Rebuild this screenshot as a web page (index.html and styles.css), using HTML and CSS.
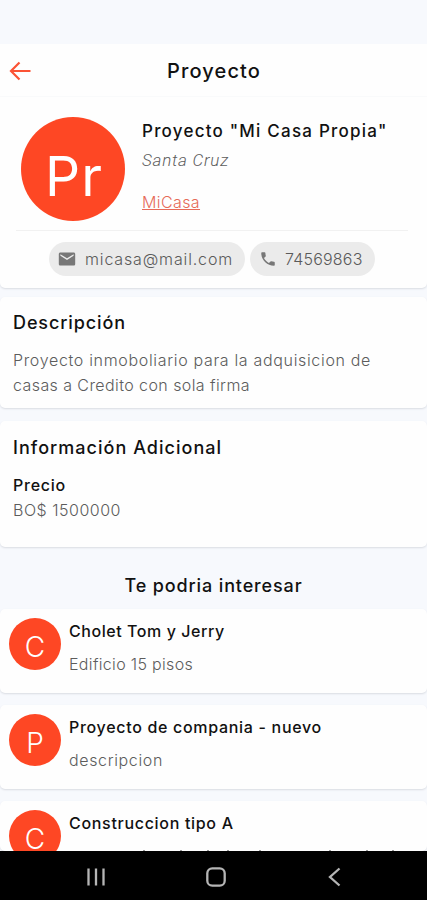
FILE: index.html
```
<!DOCTYPE html>
<html lang="es">
<head>
<meta charset="utf-8">
<title>Proyecto</title>
<link rel="stylesheet" href="styles.css">
</head>
<body>
<div class="screen">
  <div class="status"></div>
  <header class="topbar">
    <svg class="back" width="24" height="24" viewBox="0 0 24 24"><path d="M22.500 12H3M11.500 3.500 3 12l8.500 8.500"/></svg>
    <h1>Proyecto</h1>
  </header>
  <section class="card profile">
    <div class="identity">
      <div class="avatar large"><span>Pr</span></div>
      <div class="info">
        <h2 class="name">Proyecto "Mi Casa Propia"</h2>
        <p class="city">Santa Cruz</p>
        <a class="company">MiCasa</a>
      </div>
    </div>
    <div class="chips">
      <div class="chip mail">
        <svg width="20" height="18" viewBox="2 3 20 18" preserveAspectRatio="xMidYMid meet"><path d="M18.600 5.500H5.400c-.9 0-1.600.7-1.600 1.600v9.800c0 .9.7 1.600 1.600 1.600h13.200c.9 0 1.600-.7 1.600-1.600V7.100c0-.9-.7-1.600-1.600-1.600zm0 3.300L12 12.900 5.400 8.800V7.200l6.600 4.100 6.600-4.100v1.600z"/></svg>
        <span>micasa@mail.com</span>
      </div>
      <div class="chip phone">
        <svg width="18" height="18" viewBox="0 0 24 24"><path d="M6.620 10.790c1.440 2.830 3.760 5.140 6.590 6.590l2.200-2.200c.27-.27.67-.36 1.020-.24 1.120.37 2.330.57 3.570.57.55 0 1 .45 1 1V20c0 .55-.45 1-1 1C10.610 21 3 13.390 3 4c0-.55.45-1 1-1h3.500c.55 0 1 .45 1 1 0 1.250.2 2.450.57 3.570.11.35.03.74-.25 1.020l-2.200 2.200z"/></svg>
        <span>74569863</span>
      </div>
    </div>
  </section>
  <section class="card description">
    <h2>Descripción</h2>
    <p class="first">Proyecto inmoboliario para la adquisicion de</p>
    <p class="second">casas a Credito con sola firma</p>
  </section>
  <section class="card extra">
    <h2>Información Adicional</h2>
    <h3>Precio</h3>
    <p>BO$ 1500000</p>
  </section>
  <h2 class="suggest">Te podria interesar</h2>
  <article class="card item one">
    <div class="avatar"><span>C</span></div>
    <div class="text"><h3>Cholet Tom y Jerry</h3><p>Edificio 15 pisos</p></div>
  </article>
  <article class="card item two">
    <div class="avatar"><span>P</span></div>
    <div class="text"><h3>Proyecto de compania - nuevo</h3><p>descripcion</p></div>
  </article>
  <article class="card item three">
    <div class="avatar"><span>C</span></div>
    <div class="text">
      <h3>Construccion tipo A</h3>
      <svg class="clipped" width="340" height="2" viewBox="0 0 340 2"><path d="M74 1.500h2M111 1.500h2M138 1.500h2M158 1.500h2M190 1.500h2M260 1.500h2M297 1.500h2M323 1.500h2"/></svg>
    </div>
  </article>
</div>
<nav class="navbar">
  <svg width="20" height="20" viewBox="0 0 20 20"><path d="M2.500 1.500v17M10 1.500v17M17.500 1.500v17"/></svg>
  <svg width="20" height="20" viewBox="0 0 20 20"><rect x="1.300" y="1.300" width="17.400" height="17.400" rx="5"/></svg>
  <svg width="20" height="20" viewBox="0 0 20 20"><path d="M14.500 1.500 5 10l9.500 8.500"/></svg>
</nav>
</body>
</html>
```
FILE: styles.css
```
* { box-sizing: border-box; }
body {
  margin: 0;
  height: 900px;
  overflow: hidden;
  display: flex;
  flex-direction: column;
  background: #f7f9fd;
  color: #111;
  font: 300 16px/24px Inter, sans-serif;
}
h1, h2, h3, p { margin: 0; font-weight: 500; }
h2 { font-size: 18px; }
h3 { font-size: 16px; }
p { font-weight: 300; color: #5c5c5c; }
.screen { height: 851px; overflow: hidden; flex: none; }
.status { height: 44px; }
.topbar {
  height: 53px;
  background: #fefefe;
  display: grid;
  grid-template-columns: 34px 1fr 34px;
  align-items: center;
  padding: 2px 7px 0 8px;
  border-bottom: 1px solid #fbfbfc;
}
.back { fill: none; stroke: #fb5335; stroke-width: 2.2; }
h1 { font-size: 20px; letter-spacing: 1.13px; text-align: center; }

.card {
  background: #fefefe;
  border-radius: 5px;
  box-shadow: 0 1px 2px #d9dce2;
}
.avatar {
  width: 52px;
  height: 52px;
  flex: none;
  border-radius: 50%;
  background: #fe4724;
  color: #fff;
  font-size: 28px;
  display: flex;
  align-items: center;
  justify-content: center;
  padding-top: 6px;
}
.avatar.large {
  width: 104px;
  height: 104px;
  font-size: 55px;
  font-weight: 400;
  letter-spacing: 1px;
  padding: 14px 0 0 2px;
}

.profile { height: 191px; padding: 20px 19px 0 16px; border-radius: 0 0 5px 5px; }
.identity {
  display: flex;
  gap: 17px;
  height: 114px;
  padding-left: 5px;
  border-bottom: 1px solid #f1f1f1;
}
.name { font-size: 17px; letter-spacing: 1.22px; margin-top: 2px; white-space: nowrap; }
.city { font: italic 300 17px/24px Roboto, sans-serif; letter-spacing: .77px; margin: 5px 0 18px; }
.company { display: block; color: #e66a58; letter-spacing: .4px; text-decoration: underline; }
.chips { display: flex; gap: 5px; padding: 11px 0 0 33px; }
.chip {
  height: 34px;
  border-radius: 17px;
  background: #ebebeb;
  color: #5a5a5a;
  display: flex;
  align-items: center;
}
.chip svg { fill: #777; }
.mail { width: 196px; padding-left: 8px; gap: 8px; letter-spacing: .85px; }
.phone { width: 125px; padding-left: 9px; gap: 8px; letter-spacing: .2px; }

.description { height: 111px; margin-top: 9px; padding: 14px 13px 0; }
.description h2 { letter-spacing: .9px; }
.description p { line-height: 25px; }
.first { margin-top: 13px; letter-spacing: .67px; }
.second { letter-spacing: .42px; }

.extra { height: 126px; margin-top: 13px; padding: 15px 13px 0; }
.extra h2 { letter-spacing: 1.03px; }
.extra h3 { letter-spacing: .75px; margin: 13px 0 1px; }
.extra p { letter-spacing: .51px; }
.suggest { margin: 27px 0 11px; text-align: center; letter-spacing: .87px; }

.item { display: flex; height: 84px; padding: 9px 0 0 9px; gap: 8px; }
.item + .item { margin-top: 12px; }
.item h3 { margin-top: 1px; }
.item p { margin-top: 9px; }
.one h3 { letter-spacing: .56px; }
.one p { letter-spacing: .33px; }
.two h3 { letter-spacing: .69px; }
.two p { letter-spacing: .64px; }
.three { height: 50px; overflow: hidden; }
.three h3 { letter-spacing: .69px; }
.clipped { display: block; margin-top: 14px; stroke: #999; stroke-width: 1; }

.navbar {
  height: 49px;
  background: #000;
  display: flex;
  gap: 99.5px;
  align-items: center;
  padding: 2px 0 0 86px;
}
.navbar svg { fill: none; stroke: #b5b5b5; stroke-width: 2.3; }
```
